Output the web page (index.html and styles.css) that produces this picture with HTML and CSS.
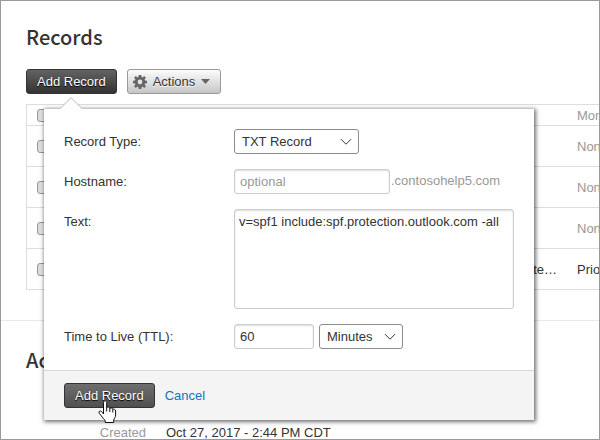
FILE: index.html
```html
<!DOCTYPE html>
<html lang="en">
<head>
<meta charset="utf-8">
<title>Records</title>
<link rel="stylesheet" href="styles.css">
</head>
<body>
<main class="page">
  <section class="section">
    <h1 class="heading">Records</h1>
    <div class="toolbar">
      <div class="anchor">
        <button type="button" class="btn btn-dark">Add Record</button>
        <form class="popover">
          <svg class="popover-arrow" width="22" height="12" viewBox="0 0 22 12" aria-hidden="true"><path class="arrow-fill" d="M0 12 11 1 22 12Z"/><path class="arrow-line" d="M.5 11 11 .7 21.5 11"/></svg>
          <div class="fields">
            <label for="type">Record Type:</label>
            <div class="control">
              <span class="select select-type">
                <select id="type"><option>TXT Record</option></select>
                <svg class="chevron" width="12" height="8" viewBox="0 0 12 8" aria-hidden="true"><path d="M1 1.2 6 6.2 11 1.2"/></svg>
              </span>
            </div>
            <label for="host">Hostname:</label>
            <div class="control control-host">
              <input id="host" class="input input-host" type="text" placeholder="optional">
              <span class="suffix">.contosohelp5.com</span>
            </div>
            <label for="text">Text:</label>
            <textarea id="text" class="input textarea">v=spf1 include:spf.protection.outlook.com -all</textarea>
            <label for="ttl">Time to Live (TTL):</label>
            <div class="control">
              <input id="ttl" class="input input-ttl" type="text" value="60">
              <span class="select select-unit">
                <select aria-label="TTL unit"><option>Minutes</option></select>
                <svg class="chevron" width="12" height="8" viewBox="0 0 12 8" aria-hidden="true"><path d="M1 1.2 6 6.2 11 1.2"/></svg>
              </span>
            </div>
          </div>
          <div class="actions">
            <button type="button" class="btn btn-hover">Add Record</button>
            <a class="link" href="#">Cancel</a>
            <svg class="cursor" width="19" height="24" viewBox="0 0 19 24" aria-hidden="true"><path class="cursor-hand" d="M5.5 14V2.5C5.5 .3 8.7 .3 8.7 2.5V7.5C9.5 6.6 11.6 7 11.8 8.4C12.8 7.6 14.6 8 14.8 9.3C16 8.7 17.6 9.4 17.6 11V15C17.6 17.5 16 18.5 15.7 20V22.5H7.2V20.5C5 18.8 3.6 15.8 1.2 13.2C.2 11.6 2 10.3 3.5 11.5Z"/><path class="cursor-line" d="M8.7 7V11.5M11.8 8.2V12M14.8 9.2V12.5"/></svg>
          </div>
        </form>
      </div>
      <button type="button" class="btn btn-light">
        <svg width="14" height="14" viewBox="0 0 14 14" aria-hidden="true"><path class="icon-fill" fill-rule="evenodd" d="M5.7 0H8.3L8.6 2 9.6 2.4 11.2 1.1 12.9 2.8 11.6 4.4 12 5.4 14 5.7V8.3L12 8.6 11.6 9.6 12.9 11.2 11.2 12.9 9.6 11.6 8.6 12 8.3 14H5.7L5.4 12 4.4 11.6 2.8 12.9 1.1 11.2 2.4 9.6 2 8.6 0 8.3V5.7L2 5.4 2.4 4.4 1.1 2.8 2.8 1.1 4.4 2.4 5.4 2ZM7 4.6A2.4 2.4 0 1 0 7 9.4A2.4 2.4 0 1 0 7 4.6Z"/></svg>
        Actions
        <svg width="9" height="5" viewBox="0 0 9 5" aria-hidden="true"><path class="icon-fill" d="M0 0H9L4.5 5Z"/></svg>
      </button>
    </div>
    <table class="records">
      <tbody>
        <tr class="row-head"><td class="cell-check"><input type="checkbox" aria-label="Select all"></td><td class="cell-value"></td><td>Mon</td></tr>
        <tr><td class="cell-check"><input type="checkbox" aria-label="Select record 1"></td><td class="cell-value"></td><td>None</td></tr>
        <tr><td class="cell-check"><input type="checkbox" aria-label="Select record 2"></td><td class="cell-value"></td><td>None</td></tr>
        <tr><td class="cell-check"><input type="checkbox" aria-label="Select record 3"></td><td class="cell-value"></td><td>None</td></tr>
        <tr class="row-strong"><td class="cell-check"><input type="checkbox" aria-label="Select record 4"></td><td class="cell-value">te…</td><td>Priority</td></tr>
      </tbody>
    </table>
  </section>
  <section class="section section-next">
    <h2 class="heading">Activity</h2>
    <dl class="details"><dt>Created</dt><dd>Oct 27, 2017 - 2:44 PM CDT</dd></dl>
  </section>
</main>
</body>
</html>
```
FILE: styles.css
```css
* { box-sizing: border-box; }

body {
  margin: 0;
  font: 13px/16px "Liberation Sans", Arial, sans-serif;
  color: #333;
  background: #fff;
}

.page {
  height: 100vh;
  border: 1px solid #999;
  overflow: hidden;
}

.section { padding: 20px 0 0 25px; }

.section-next {
  margin-top: 30px;
  border-top: 1px solid #e8e8e8;
}

.heading {
  margin: 0;
  font: 500 20px/32px "Noto Sans CJK SC", "Noto Sans", sans-serif;
}

.toolbar {
  display: flex;
  gap: 10px;
  margin: 16px 0 10px;
}

.section-next .heading { padding-top: 3px; }

.anchor { position: relative; }

.btn {
  display: flex;
  align-items: center;
  height: 25px;
  padding: 0 10px;
  border: 1px solid #333;
  border-radius: 3px;
  font: inherit;
  color: #fff;
  text-shadow: 0 1px 1px #000;
}

.btn-dark { background: linear-gradient(#636363, #333); }

.btn-hover { background: linear-gradient(#6e6e6e, #505050); }

.btn-light {
  gap: 6px;
  padding: 0 10px 0 5px;
  border-color: #999;
  color: #333;
  text-shadow: 0 1px 0 #fff;
  background: linear-gradient(#fcfcfc, #c6c6c6);
}

.icon-fill { fill: #666; }

.popover {
  position: absolute;
  z-index: 1;
  top: 40px;
  left: 18px;
  width: 490px;
  background: #fff;
  box-shadow: 1px 1px 4px 1px rgba(0, 0, 0, .55);
}

.popover-arrow {
  position: absolute;
  top: -12px;
  left: 16px;
}

.arrow-fill { fill: #fff; }

.arrow-line { fill: none; stroke: #bbb; }

.fields {
  display: grid;
  grid-template-columns: 170px 1fr;
  gap: 15px 0;
  padding: 20px 20px 21px;
}

.fields label { padding-top: 5px; }

.control {
  display: flex;
  gap: 5px;
}

.control-host { gap: 1px; }

.suffix {
  padding-top: 4px;
  color: #999;
}

.input {
  height: 25px;
  padding: 0 5px;
  border: 1px solid #ccc;
  border-radius: 3px;
  font: inherit;
  color: #333;
  background: #fff;
  box-shadow: inset 0 1px 2px #ddd;
}

.input::placeholder { color: #999; }

.input-host { width: 156px; }

.input-ttl { width: 80px; }

.textarea {
  display: block;
  width: 100%;
  height: 100px;
  padding: 4px;
  resize: none;
}

.select {
  position: relative;
  height: 25px;
}

.select select {
  appearance: none;
  width: 100%;
  height: 100%;
  padding: 0 7px;
  border: 1px solid #8c8c8c;
  border-radius: 3px;
  font: inherit;
  color: #333;
  background: #fff;
}

.select-type { width: 125px; }

.select-unit { width: 84px; }

.chevron {
  position: absolute;
  top: 9px;
  right: 7px;
  pointer-events: none;
}

.chevron path { fill: none; stroke: #333; }

.actions {
  position: relative;
  display: flex;
  align-items: center;
  gap: 10px;
  padding: 12px 20px;
  border-top: 1px solid #d8d8d8;
  background: #f4f4f4;
}

.link {
  color: #1a6fba;
  text-decoration: none;
}

.cursor {
  position: absolute;
  top: 29px;
  left: 54px;
  pointer-events: none;
}

.cursor-hand { fill: #fff; stroke: #111; }

.cursor-line { fill: none; stroke: #111; }

.records {
  width: calc(100% + 40px);
  border-collapse: collapse;
  table-layout: fixed;
  color: #999;
}

.records td {
  height: 41px;
  padding: 2px 0 0;
  border: solid #ddd;
  border-width: 1px 0;
}

.records .row-head td { height: 21px; }

.records td.cell-check {
  width: 49px;
  padding: 0 0 0 10px;
  border-left-width: 1px;
}

.records td.cell-value {
  padding-right: 20px;
  text-align: right;
}

.records td:last-child { width: 62px; }

.records .row-strong { color: #333; }

.records input {
  appearance: none;
  display: block;
  width: 13px;
  height: 13px;
  margin: 0;
  border: 1px solid #999;
  border-radius: 3px;
  background: linear-gradient(90deg, #d8d8d8, #fff);
}

.details {
  display: grid;
  grid-template-columns: 120px 1fr;
  gap: 0 20px;
  margin: 49px 0 0;
}

.details dt {
  color: #999;
  text-align: right;
}

.details dd { margin: 0; }
```
